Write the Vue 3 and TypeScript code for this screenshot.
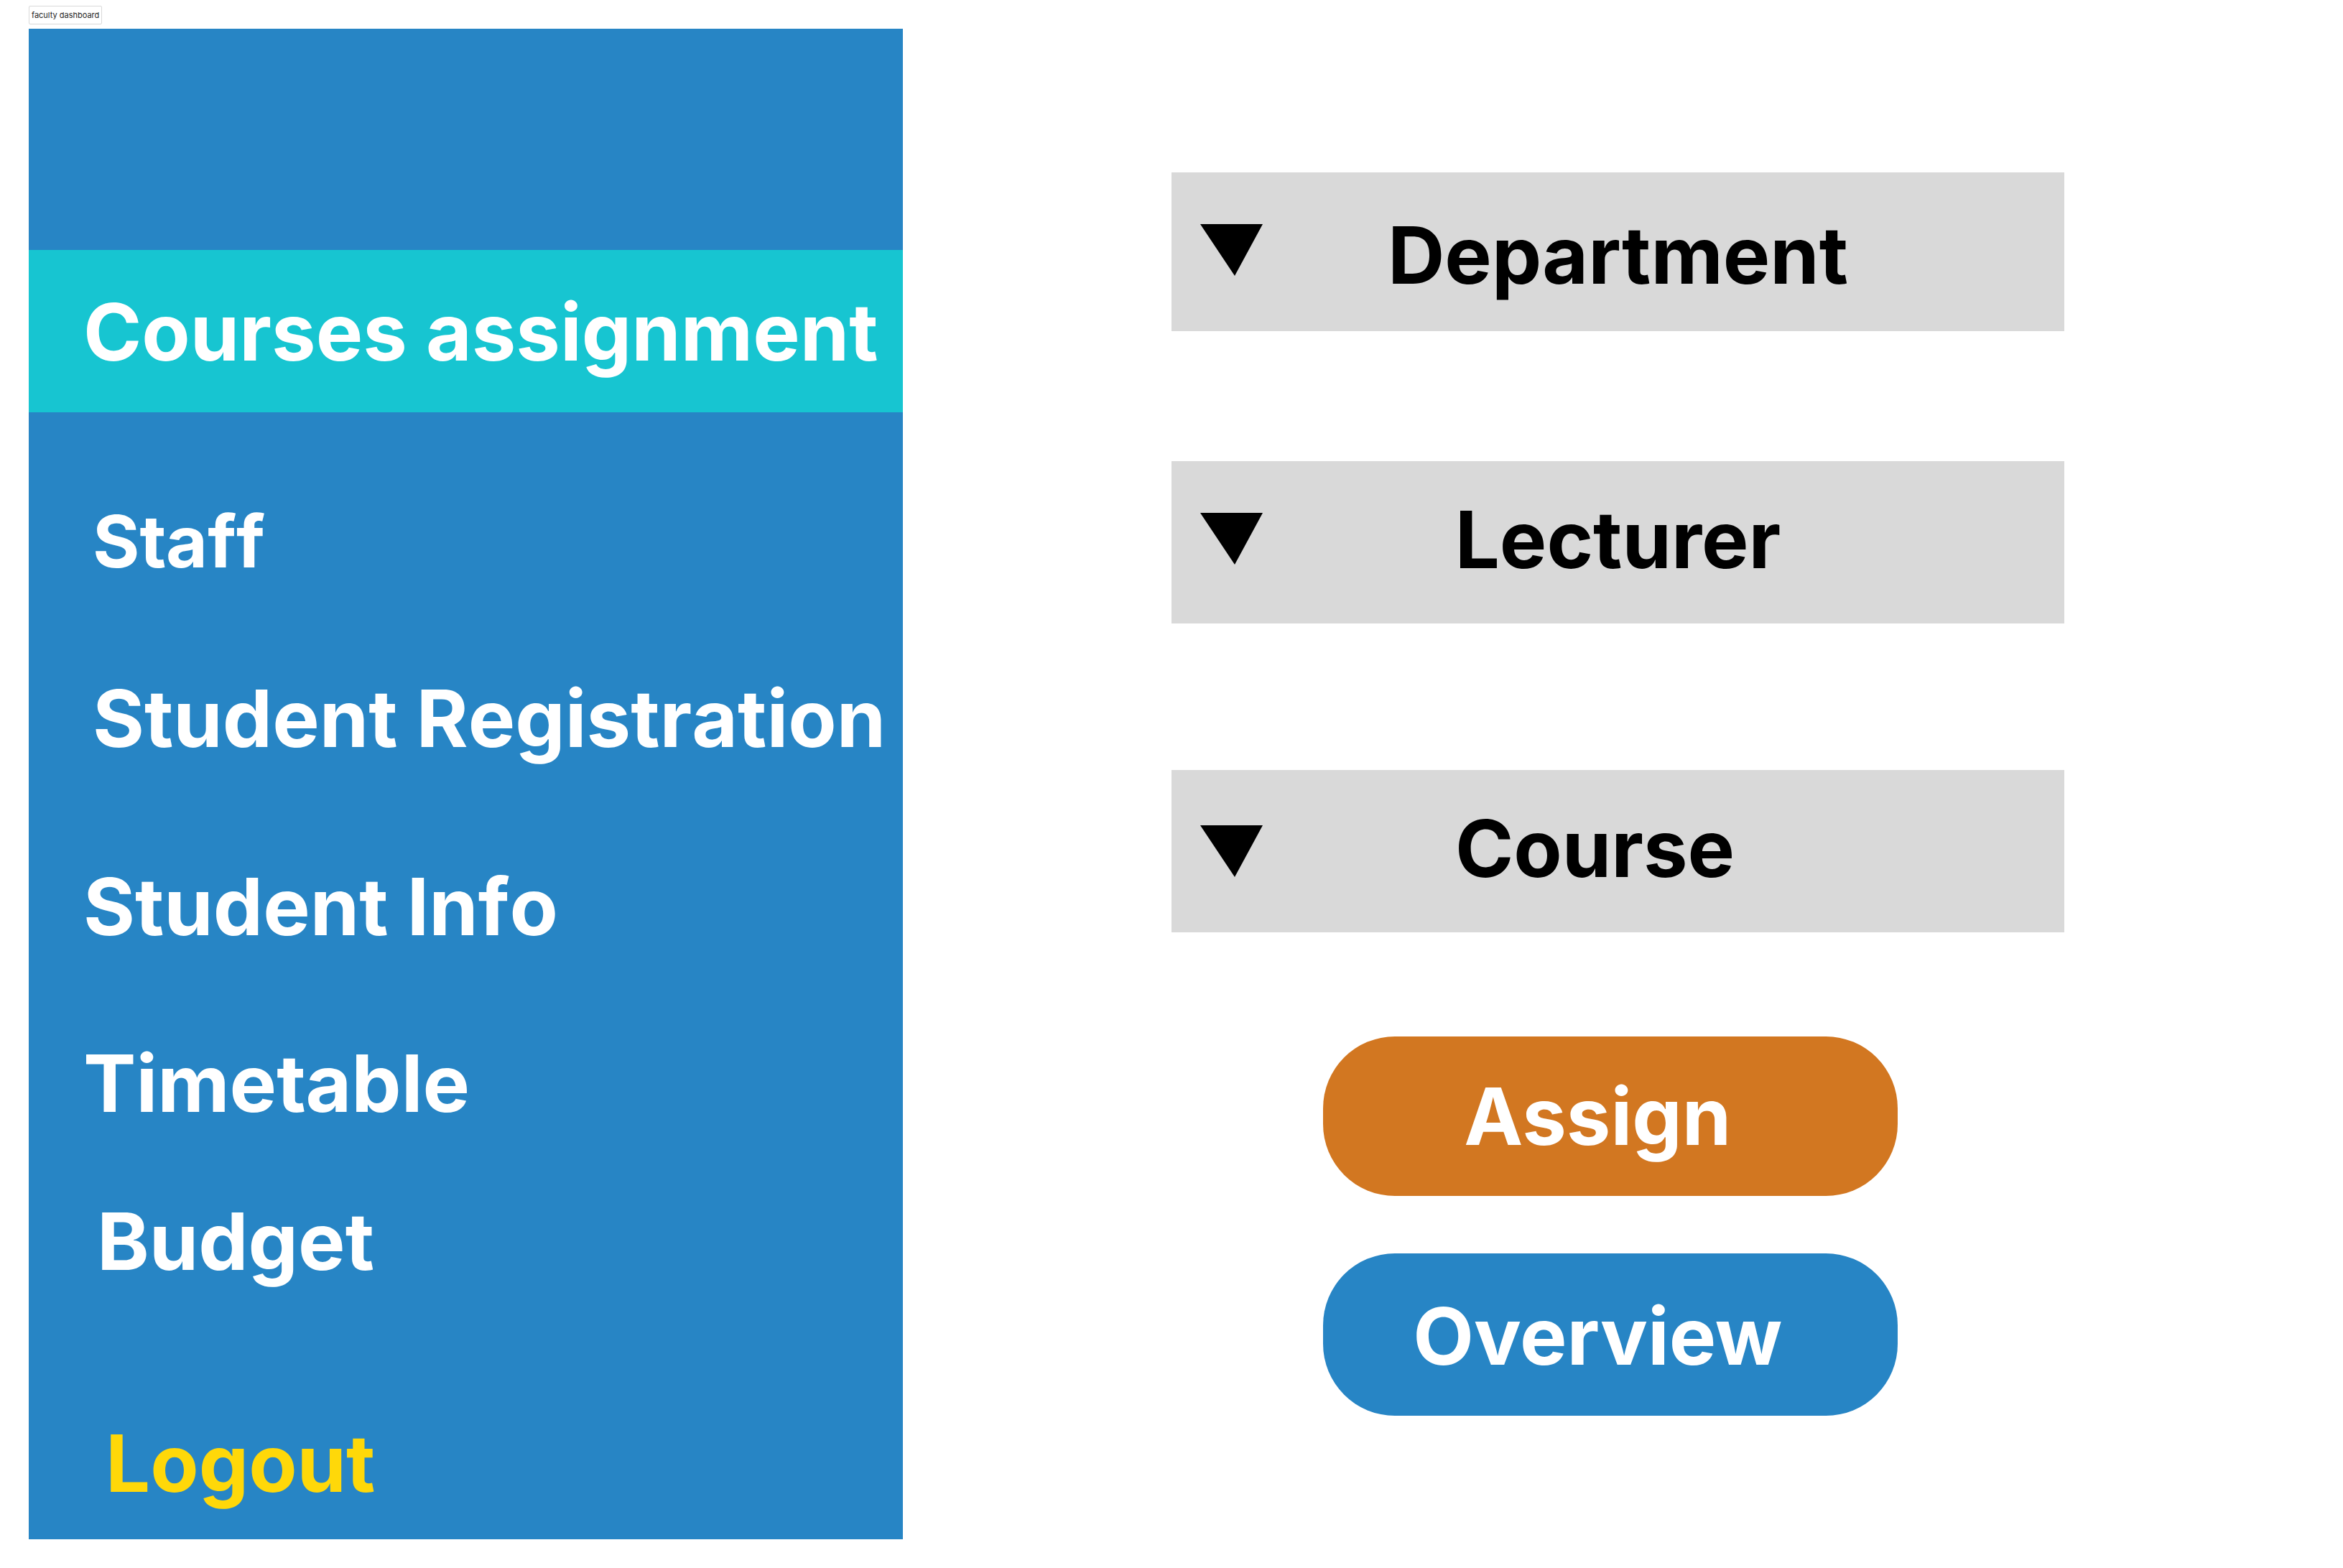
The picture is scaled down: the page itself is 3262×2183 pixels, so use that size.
<script setup lang="ts">
import { ref } from 'vue'

interface NavItem {
  label: string
  classes: string
}

interface Field {
  id: string
  label: string
}

const navItems: NavItem[] = [
  { label: 'Courses assignment', classes: 'active' },
  { label: 'Staff', classes: 'indented compact' },
  { label: 'Student Registration', classes: 'indented' },
  { label: 'Student Info', classes: 'spaced' },
  { label: 'Timetable', classes: '' },
  { label: 'Budget', classes: 'deep tight' },
]

const fields: Field[] = [
  { id: 'department', label: 'Department' },
  { id: 'lecturer', label: 'Lecturer' },
  { id: 'course', label: 'Course' },
]

const selected = ref<Record<string, string>>({ department: '', lecturer: '', course: '' })
</script>

<template>
  <div class="page">
    <header class="top">
      <h1 class="tag">faculty dashboard</h1>
    </header>
    <div class="layout">
      <nav class="sidebar">
        <a v-for="item in navItems" :key="item.label" href="#" class="link" :class="item.classes">{{ item.label }}</a>
        <a href="#" class="link logout">Logout</a>
      </nav>
      <main class="content">
        <form class="form" @submit.prevent>
          <div v-for="field in fields" :key="field.id" class="field" :class="field.id">
            <select :id="field.id" v-model="selected[field.id]" class="select" :aria-label="field.label">
              <option value="">{{ field.label }}</option>
            </select>
            <svg class="arrow" viewBox="0 0 87 72" aria-hidden="true">
              <path d="M0 0H87L48 72Z" />
            </svg>
          </div>
          <div class="actions">
            <button type="submit" class="button assign">Assign</button>
            <button type="button" class="button overview">Overview</button>
          </div>
        </form>
      </main>
    </div>
  </div>
</template>

<style>
body {
  margin: 0;
  background: #ffffff;
}
</style>

<style scoped>
.page {
  box-sizing: border-box;
  display: flex;
  flex-direction: column;
  min-height: 100vh;
  padding: 0 0 40px 40px;
  font-family: Inter, "Liberation Sans", sans-serif;
}

.top {
  box-sizing: border-box;
  display: flex;
  align-items: flex-start;
  height: 40px;
  padding-top: 8px;
}

.tag {
  margin: 0;
  padding: 0 3px;
  border: 1px solid #d9d9d9;
  border-radius: 2px;
  font-size: 11px;
  font-weight: 400;
  line-height: 24px;
  color: #1e1e1e;
}

.layout {
  flex: 1;
  display: grid;
  grid-template-columns: 1217fr 374fr 1243fr 388fr;
}

.sidebar {
  grid-column: 1;
  box-sizing: border-box;
  display: flex;
  flex-direction: column;
  min-width: 0;
  padding: 308px 0 40px;
  background: #2785c5;
}

.link {
  margin-top: 114px;
  padding-left: 76px;
  font-size: 110px;
  font-weight: 700;
  line-height: 132px;
  color: #ffffff;
  font-kerning: none;
  font-variant-ligatures: none;
  text-decoration: none;
  white-space: nowrap;
}

.link.active {
  margin-top: 0;
  padding-top: 48px;
  padding-bottom: 46px;
  background: #17c5d1;
}

.link.indented {
  padding-left: 89px;
}

.link.compact {
  font-size: 100px;
}

.link.deep {
  padding-left: 95px;
}

.link.spaced {
  margin-top: 130px;
}

.link.tight {
  margin-top: 88px;
}

.link.logout {
  margin-top: auto;
  padding-left: 107px;
  color: #ffd809;
}

.content {
  grid-column: 3;
  min-width: 0;
  padding-top: 200px;
}

.field {
  display: grid;
  background: #d9d9d9;
}

.select {
  grid-area: 1 / 1;
  appearance: none;
  box-sizing: border-box;
  width: 100%;
  height: 226px;
  margin: 0;
  padding: 42px 0 52px;
  border: 0;
  border-radius: 0;
  background: transparent;
  font: inherit;
  font-size: 110px;
  font-weight: 700;
  color: #000000;
  text-align: center;
  text-align-last: center;
}

.arrow {
  grid-area: 1 / 1;
  width: 87px;
  height: 72px;
  margin: 72px 0 0 40px;
  pointer-events: none;
}

.department .select {
  height: 221px;
  padding-top: 48px;
  padding-bottom: 40px;
}

.lecturer {
  margin-top: 181px;
}

.course {
  margin-top: 204px;
}

.course .select {
  padding-right: 64px;
}

.course .arrow {
  margin-top: 77px;
}

.actions {
  display: flex;
  flex-direction: column;
  gap: 80px;
  margin: 145px 0 0 17%;
}

.button {
  width: 800px;
  max-width: 100%;
  height: 226px;
  margin: 0;
  padding: 0 36px 0 0;
  border: 0;
  border-radius: 100px;
  font: inherit;
  font-size: 110px;
  font-weight: 700;
  color: #ffffff;
  cursor: pointer;
}

.assign {
  height: 222px;
  background: #d27721;
}

.overview {
  padding-top: 4px;
  background: #2785c5;
}
</style>
